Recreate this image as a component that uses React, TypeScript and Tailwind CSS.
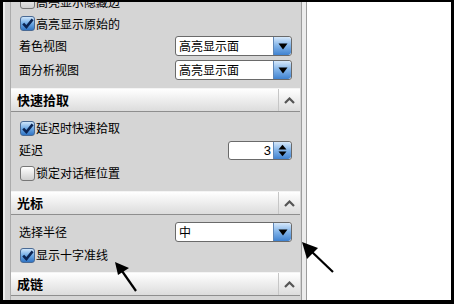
import React from "react";

const FONT = { fontFamily: '"Noto Sans CJK SC", "Noto Sans", sans-serif' };

function CheckBox({ checked }: { checked: boolean }) {
  if (checked) {
    return (
      <div className="ml-[1px] w-[15px] h-[15px] rounded-[3px] border border-[#4a6a94] bg-gradient-to-b from-[#cfe6fb] via-[#6ea9e4] to-[#2f74c4] flex items-center justify-center shrink-0">
        <svg width="12" height="11" viewBox="0 0 12 11">
          <path d="M1.2 5.6 L4.4 9 L10.6 1.4" fill="none" stroke="#0b2453" strokeWidth="2.6" strokeLinejoin="miter" />
        </svg>
      </div>
    );
  }
  return (
    <div className="ml-[1px] w-[15px] h-[15px] rounded-[3px] border border-[#777] bg-gradient-to-b from-white to-[#cfcfcf] shrink-0" />
  );
}

function BlueBtn({ children }: { children: React.ReactNode }) {
  return (
    <div className="w-[18px] h-full rounded-r-[3px] border-l border-l-[#5f86b5] bg-gradient-to-b from-[#d6e8fa] via-[#7fb2e8] to-[#3f82d0] flex flex-col items-center justify-center">
      {children}
    </div>
  );
}

function Select({ value }: { value: string }) {
  return (
    <div className="w-[117px] h-[20px] rounded-[3px] border border-[#6a6a6a] bg-white flex items-stretch overflow-hidden">
      <div className="flex-1 pl-[3px] text-[12px] leading-[18px] text-black" style={FONT}>
        {value}
      </div>
      <BlueBtn>
        <svg width="10" height="7" viewBox="0 0 10 7">
          <path d="M0.5 0.5 H9.5 L5 6.5 Z" fill="#000" />
        </svg>
      </BlueBtn>
    </div>
  );
}

function Spin({ value }: { value: string }) {
  return (
    <div className="w-[64px] h-[19px] rounded-[3px] border border-[#6a6a6a] bg-white flex items-stretch overflow-hidden">
      <div
        className="flex-1 pr-[2px] text-right text-[13px] leading-[17px] text-black"
        style={{ fontFamily: '"Liberation Sans", Arial, sans-serif' }}
      >
        {value}
      </div>
      <BlueBtn>
        <svg width="9" height="13" viewBox="0 0 9 13">
          <path d="M0.5 5.5 L4.5 0.8 L8.5 5.5 Z" fill="#000" />
          <path d="M0.5 7.5 L4.5 12.2 L8.5 7.5 Z" fill="#000" />
        </svg>
      </BlueBtn>
    </div>
  );
}

function CheckRow({ label, checked, h }: { label: string; checked: boolean; h: string }) {
  return (
    <div className={`flex items-center ${h}`}>
      <CheckBox checked={checked} />
      <span className="ml-[1px] text-[12px] text-black leading-none" style={FONT}>
        {label}
      </span>
    </div>
  );
}

function LabelRow({ label, h, children }: { label: string; h: string; children: React.ReactNode }) {
  return (
    <div className={`flex items-center justify-between ${h}`}>
      <span className="text-[12px] text-black leading-none" style={FONT}>
        {label}
      </span>
      {children}
    </div>
  );
}

function Header({ title }: { title: string }) {
  return (
    <div className="h-[24px] flex items-stretch border-t border-t-[#f4f4f4] border-b border-b-[#8e8e8e] bg-gradient-to-b from-[#ffffff] to-[#dcdcdc]">
      <div className="flex-1 pl-[6px] flex items-center text-[13px] font-bold text-black" style={FONT}>
        {title}
      </div>
      <div className="w-[22px] border-l border-l-[#c6c6c6] flex items-center justify-center">
        <svg width="11" height="7" viewBox="0 0 11 7">
          <path d="M1 6 L5.5 1.5 L10 6" fill="none" stroke="#555" strokeWidth="2.2" />
        </svg>
      </div>
    </div>
  );
}

export default function App() {
  return (
    <div className="relative w-[454px] h-[304px] bg-black overflow-hidden pt-[2px] pl-[3px] pr-[3px] pb-[4px]">
      <div className="flex h-full">
        {/* Panel */}
        <div className="w-[298px] h-full bg-[#d2d2d2] border-l-2 border-l-[#ececec] pl-[5px] pr-[1px] overflow-hidden">
          <div className="w-[290px] h-full border-l border-l-[#ababab] bg-[#d5d5d5] flex flex-col overflow-hidden">
            {/* top section (cut) */}
            <div className="mt-[-12px] pl-[8px] pr-[8px] pb-[6px] flex flex-col">
              <CheckRow label="高亮显示隐藏边" checked={false} h="h-[23px]" />
              <CheckRow label="高亮显示原始的" checked={true} h="h-[21px]" />
              <LabelRow label="着色视图" h="h-[24px]">
                <Select value="高亮显示面" />
              </LabelRow>
              <LabelRow label="面分析视图" h="h-[24px]">
                <Select value="高亮显示面" />
              </LabelRow>
            </div>
            <Header title="快速拾取" />
            <div className="pt-[5px] pb-[6px] pl-[8px] pr-[8px] flex flex-col">
              <CheckRow label="延迟时快速拾取" checked={true} h="h-[22px]" />
              <LabelRow label="延迟" h="h-[22px]">
                <Spin value="3" />
              </LabelRow>
              <CheckRow label="锁定对话框位置" checked={false} h="h-[24px]" />
            </div>
            <Header title="光标" />
            <div className="pt-[5px] pb-[6px] pl-[8px] pr-[8px] flex flex-col">
              <LabelRow label="选择半径" h="h-[24px]">
                <Select value="中" />
              </LabelRow>
              <CheckRow label="显示十字准线" checked={true} h="h-[22px]" />
            </div>
            <Header title="成链" />
            <div className="flex-1" />
          </div>
        </div>
        {/* splitter */}
        <div className="w-[6px] h-full border-l border-l-[#9c9c9c] border-r border-r-[#9c9c9c] bg-[#ececec]" />
        {/* white area */}
        <div className="flex-1 h-full bg-white" />
      </div>

      {/* annotation arrows */}
      <svg className="absolute left-0 top-0 pointer-events-none" width="454" height="304" viewBox="0 0 454 304">
        <line x1="136" y1="291" x2="122" y2="271" stroke="#000" strokeWidth="2.2" />
        <path d="M115 262 L129 268 L118 275 Z" fill="#000" />
        <line x1="333" y1="272" x2="311" y2="251" stroke="#000" strokeWidth="2.2" />
        <path d="M302 242 L318 248 L307 259 Z" fill="#000" />
      </svg>
    </div>
  );
}
